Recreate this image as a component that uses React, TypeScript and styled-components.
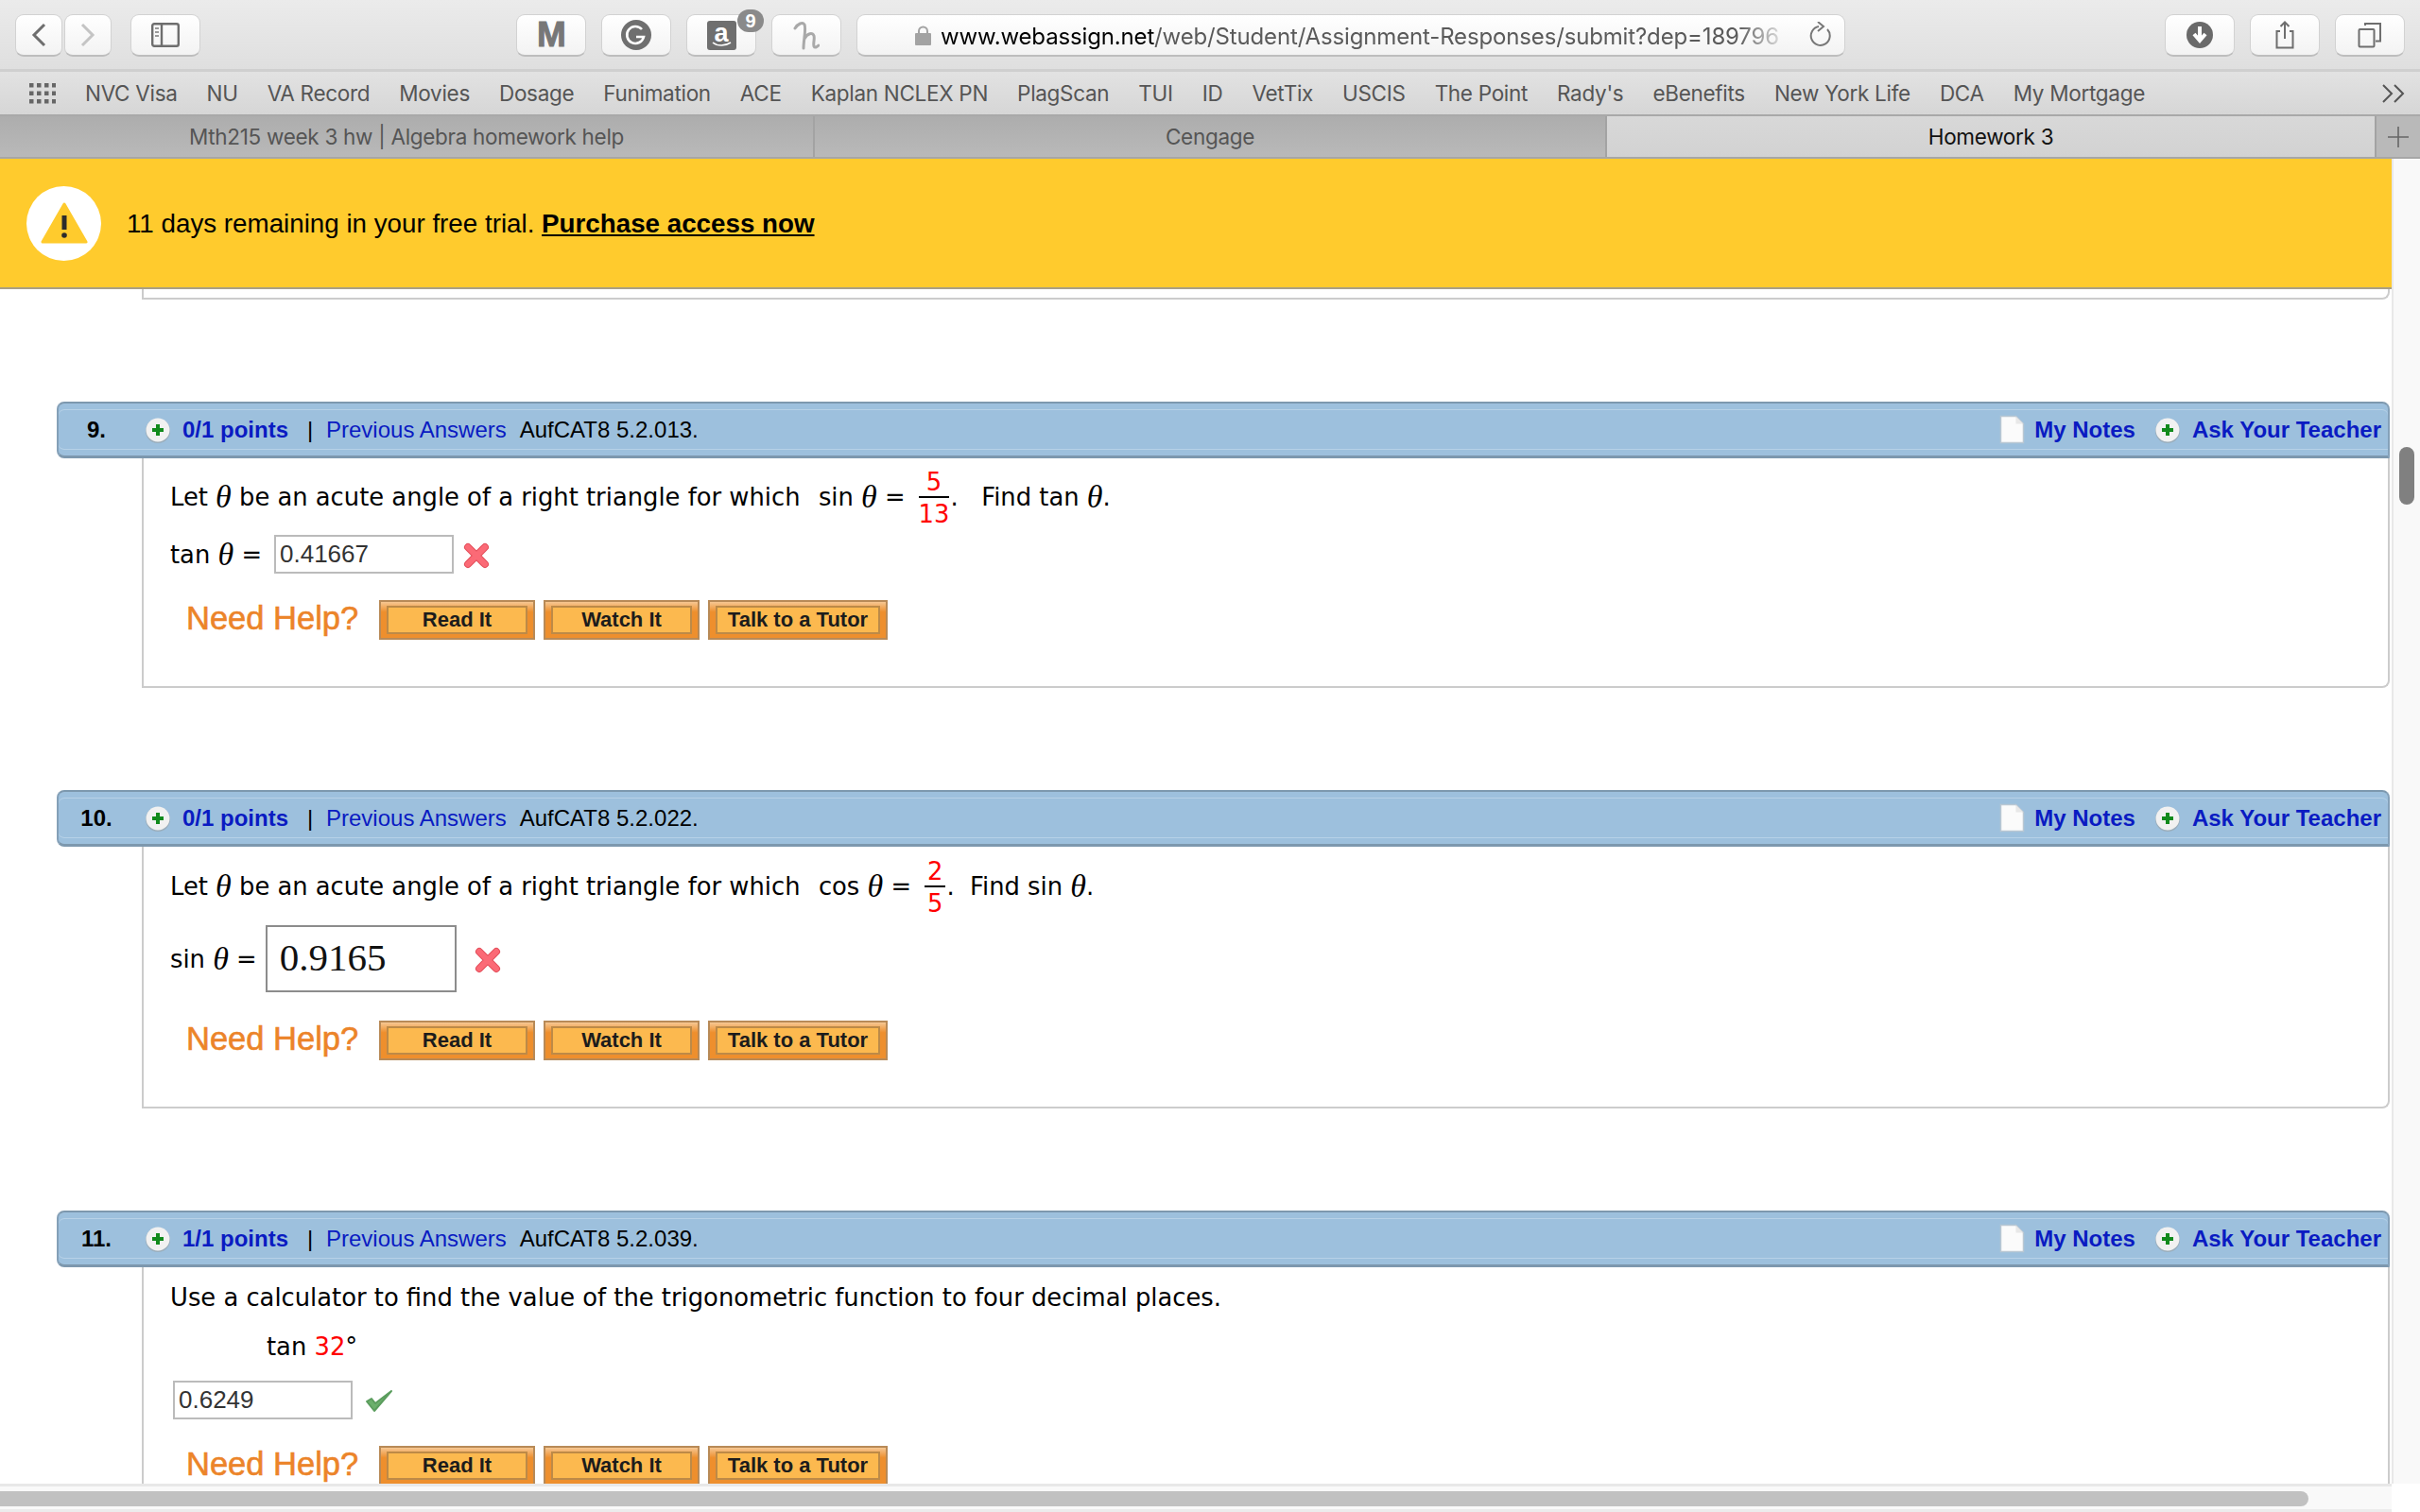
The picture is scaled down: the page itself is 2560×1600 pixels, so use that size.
import React from "react";
import styled, { createGlobalStyle } from "styled-components";

const GlobalStyle = createGlobalStyle`
  html, body {
    margin: 0;
    padding: 0;
    background: #fff;
  }
  * {
    box-sizing: border-box;
  }
`;

const Page = styled.div`
  width: 2560px;
  height: 1600px;
  display: flex;
  flex-direction: column;
  overflow: hidden;
  font-family: "Liberation Sans", Arial, sans-serif;
`;

/* browser chrome */
const Toolbar = styled.div`
  height: 76px;
  display: flex;
  align-items: flex-start;
  padding: 15px 16px 0;
  background: linear-gradient(#ebebeb, #dfdfdf);
  border-bottom: 3px solid #cfcfcf;
`;
const ToolGroup = styled.div<{ $gap?: number; $left?: number; $auto?: boolean }>`
  display: flex;
  gap: ${(p) => p.$gap ?? 16}px;
  margin-left: ${(p) => (p.$auto ? "auto" : `${p.$left ?? 0}px`)};
`;
const ToolButton = styled.div<{ $w: number }>`
  position: relative;
  width: ${(p) => p.$w}px;
  height: 45px;
  display: flex;
  align-items: center;
  justify-content: center;
  background: linear-gradient(#fff, #f3f3f3);
  border: 1px solid #d2d2d2;
  border-bottom: 2px solid #bdbdbd;
  border-radius: 9px;
`;
const MarkM = styled.span`
  font: bold 37px "Liberation Sans", sans-serif;
  color: #777;
  -webkit-text-stroke: 1px #777;
  letter-spacing: -1px;
`;
const AmazonTile = styled.div`
  position: relative;
  width: 31px;
  height: 31px;
  background: #6f6f6f;
  border-radius: 3px;
  color: #fff;
  font: bold 27px/26px "Liberation Sans", sans-serif;
  text-align: center;
`;
const Smile = styled.svg`
  position: absolute;
  left: 4px;
  bottom: 2px;
`;
const Badge = styled.span`
  position: absolute;
  top: -6px;
  right: -9px;
  width: 28px;
  height: 24px;
  border-radius: 12px;
  background: #8a8a8a;
  color: #fff;
  font: bold 20px/24px "Liberation Sans", sans-serif;
  text-align: center;
`;
const UrlBar = styled(ToolButton)`
  margin-left: 16px;
  justify-content: flex-start;
  padding-left: 61px;
  gap: 10px;
  overflow: hidden;
`;
const UrlText = styled.span`
  width: 898px;
  margin-top: 2px;
  white-space: nowrap;
  font: 24px "Inter", sans-serif;
  letter-spacing: -0.15px;
  color: #5a5a5a;
  -webkit-mask-image: linear-gradient(90deg, #000 94%, transparent 100%);
  mask-image: linear-gradient(90deg, #000 94%, transparent 100%);
  b {
    font-weight: 400;
    color: #000;
  }
`;
const Reload = styled.svg`
  margin-left: 11px;
  flex: none;
`;
const Bookmarks = styled.div`
  height: 45px;
  display: flex;
  align-items: center;
  gap: 31px;
  padding: 0 16px 0 31px;
  background: linear-gradient(#e2e2e2, #d6d6d6);
  font: 22.5px "Inter", sans-serif;
  letter-spacing: -0.3px;
  color: #555;
  white-space: nowrap;
`;
const More = styled.svg`
  margin-left: auto;
  margin-right: -1px;
`;
const Tabs = styled.div`
  height: 47px;
  display: flex;
  border-top: 2px solid #a9a9a9;
  border-bottom: 2px solid #a6a6a6;
  font: 22.5px "Inter", sans-serif;
  letter-spacing: -0.3px;
`;
const Tab = styled.div<{ $w: number; $active?: boolean }>`
  width: ${(p) => p.$w}px;
  display: flex;
  align-items: center;
  justify-content: center;
  color: ${(p) => (p.$active ? "#111" : "#555")};
  background: ${(p) => (p.$active ? "linear-gradient(#d8d8d8, #d2d2d2)" : "linear-gradient(#adadad, #b9b9b9)")};
  border-right: 2px solid #a3a3a3;
`;
const NewTab = styled.div`
  flex: 1;
  display: flex;
  align-items: center;
  justify-content: center;
  background: #b9b9b9;
`;

/* page area */
const Main = styled.div`
  flex: 1;
  min-height: 0;
  display: grid;
  grid-template-columns: 2530px 30px;
  grid-template-rows: 1fr 30px;
`;
const Content = styled.div`
  overflow: hidden;
  min-height: 0;
`;
const Banner = styled.div`
  height: 138px;
  display: flex;
  align-items: center;
  gap: 27px;
  padding-left: 28px;
  background: #ffcb2d;
  border-bottom: 2px solid #a99f84;
  font-size: 27.75px;
  color: #000;
`;
const BannerText = styled.span`
  margin-top: 2px;
`;
const WarnCircle = styled.div`
  width: 79px;
  height: 79px;
  flex: none;
  border-radius: 50%;
  background: #fff;
  display: flex;
  align-items: center;
  justify-content: center;
`;
const Purchase = styled.a`
  font-weight: bold;
  color: #000;
  text-decoration: underline;
`;
const Questions = styled.div`
  padding: 0 2px 0 60px;
`;
const PrevBoxEnd = styled.div`
  height: 11px;
  margin-left: 90px;
  border: 2px solid #ccc;
  border-top: none;
  border-bottom-right-radius: 8px;
`;
const Question = styled.section`
  margin-top: 108px;
`;
const Header = styled.div`
  height: 60px;
  display: flex;
  align-items: center;
  background: #9dc0dd;
  border: 2px solid #7d98ae;
  border-left-color: #84a0b8;
  border-right-color: #84a0b8;
  border-bottom-width: 3px;
  border-radius: 8px 8px 0 8px;
  box-shadow: inset 0 6px 0 #9dc0dd, inset 0 7px 0 #b7d1e7, inset 0 -6px 0 #9dc0dd, inset 0 -7px 0 #b7d1e7;
  font-size: 24px;
  color: #000;
  white-space: nowrap;
`;
const Num = styled.span`
  width: 80px;
  text-align: center;
  font-weight: bold;
`;
const PlusIcon = styled.svg<{ $left?: number }>`
  flex: none;
  margin-left: ${(p) => p.$left ?? 0}px;
`;
const Points = styled.a`
  margin-left: 12px;
  width: 130px;
  font-weight: bold;
  color: #0a1bc2;
`;
const Pipe = styled.span`
  width: 20px;
  margin-left: 2px;
`;
const PrevLink = styled.a`
  color: #0a1bc2;
  margin-right: 14px;
`;
const HeaderRight = styled.div`
  margin-left: auto;
  display: flex;
  align-items: center;
  padding-right: 7px;
  font-weight: bold;
  color: #0a1bc2;
`;
const DocIcon = styled.svg`
  margin-right: 10px;
`;
const NotesLabel = styled.a`
  margin-right: 20px;
`;
const AskLabel = styled.a`
  margin-left: 12px;
`;
const Body = styled.div`
  margin-left: 90px;
  padding-left: 28px;
  padding-bottom: 49px;
  border: 2px solid #ccc;
  border-top: none;
  border-bottom-right-radius: 8px;
  font-family: "DejaVu Sans", Verdana, sans-serif;
  font-size: 25.8px;
  color: #000;
`;
const Line = styled.div<{ $h: number; $left?: number }>`
  height: ${(p) => p.$h}px;
  display: flex;
  align-items: center;
  white-space: pre;
  padding-left: ${(p) => p.$left ?? 0}px;
`;
const Func = styled.span`
  margin-left: 3px;
`;
const Theta = styled.i`
  font-family: "Liberation Serif", serif;
  font-size: 34px;
`;
const Frac = styled.span`
  display: inline-flex;
  flex-direction: column;
  align-items: center;
  margin: 6px 1px 0 14px;
  color: #f00;
  line-height: 35px;
`;
const FracTop = styled.span`
  min-width: 22px;
  border-bottom: 2px solid #000;
  align-self: stretch;
  text-align: center;
  padding: 0 3px;
  line-height: 29px;
`;
const Red = styled.span`
  color: #f00;
`;
const AnswerRow = styled.div<{ $mt?: number; $left?: number }>`
  display: flex;
  align-items: center;
  white-space: pre;
  margin-top: ${(p) => p.$mt ?? 0}px;
  margin-left: ${(p) => p.$left ?? 0}px;
`;
const Answer = styled.div`
  width: 190px;
  height: 41px;
  margin-left: 13px;
  padding-left: 4px;
  border: 2px solid #bbb;
  font: 26px/37px "Liberation Sans", sans-serif;
  color: #333;
`;
const BigAnswer = styled.div`
  width: 202px;
  height: 71px;
  margin-left: 9px;
  padding-left: 13px;
  border: 2px solid #8c8c8c;
  font: 41px/65px "Liberation Serif", serif;
  color: #111;
`;
const Mark = styled.svg<{ $left: number; $down?: number }>`
  margin-left: ${(p) => p.$left}px;
  margin-top: ${(p) => p.$down ?? 2}px;
`;
const HelpRow = styled.div<{ $mt: number }>`
  display: flex;
  align-items: center;
  margin-top: ${(p) => p.$mt}px;
  margin-left: 17px;
  font-family: "Liberation Sans", sans-serif;
`;
const NeedHelp = styled.span`
  width: 204px;
  margin-top: -4px;
  font-size: 34.5px;
  line-height: 40px;
  color: #ec8429;
  -webkit-text-stroke: 0.6px #ec8429;
`;
const HelpButtons = styled.div`
  display: flex;
  gap: 9px;
`;
const HelpButton = styled.a<{ $w: number }>`
  width: ${(p) => p.$w}px;
  height: 42px;
  display: flex;
  padding: 4px 6px;
  background: linear-gradient(#f6c792, #ee8f2d 28%);
  border: 2px solid #b88a57;
`;
const HelpLabel = styled.span`
  flex: 1;
  display: flex;
  align-items: center;
  justify-content: center;
  background: #fcb94f;
  border: 2px solid #bd8a47;
  font-size: 22px;
  font-weight: bold;
  color: #1c1c1c;
`;
const VTrack = styled.div`
  padding-left: 6px;
  background: #f9f9f9;
  border-left: 2px solid #e8e8e8;
`;
const VThumb = styled.div`
  width: 16px;
  height: 61px;
  margin-top: 305px;
  border-radius: 8px;
  background: #808080;
`;
const HTrack = styled.div`
  padding-top: 5px;
  background: #f9f9f9;
  border-top: 3px solid #e8e8e8;
  border-bottom: 3px solid #ececec;
`;
const HThumb = styled.div`
  width: 2442px;
  height: 16px;
  border-radius: 0 8px 8px 0;
  background: #c1c1c1;
`;
const Corner = styled.div`
  background: #fff;
`;

const bookmarks = [
  "NVC Visa", "NU", "VA Record", "Movies", "Dosage", "Funimation", "ACE", "Kaplan NCLEX PN", "PlagScan",
  "TUI", "ID", "VetTix", "USCIS", "The Point", "Rady's", "eBenefits", "New York Life", "DCA", "My Mortgage",
];

const Plus = ({ left }: { left?: number }) => (
  <PlusIcon $left={left} width="28" height="28" viewBox="0 0 28 28">
    <circle cx="14" cy="15" r="13" fill="#9aa5ad" opacity="0.7" />
    <circle cx="14" cy="14" r="12.5" fill="#f1f1f1" />
    <path d="M14 8v12M8 14h12" stroke="#118a1c" strokeWidth="4" />
  </PlusIcon>
);

const Cross = ({ left, down }: { left: number; down?: number }) => (
  <Mark $left={left} $down={down} width="28" height="28" viewBox="0 0 28 28">
    <path d="M5 5l18 18M23 5L5 23" stroke="#e4505c" strokeWidth="8" strokeLinecap="round" />
    <path d="M5 5l18 18M23 5L5 23" stroke="#fb6a76" strokeWidth="6" strokeLinecap="round" />
  </Mark>
);

const Check = () => (
  <Mark $left={12} width="32" height="28" viewBox="0 0 32 28">
    <path d="M3 14l8 10L29 3l-17 13-4-5z" fill="#6cb06c" stroke="#5b9d5e" strokeWidth="2" strokeLinejoin="round" />
  </Mark>
);

function QuestionHeader({ num, points, code }: { num: string; points: string; code: string }) {
  return (
    <Header>
      <Num>{num}</Num>
      <Plus left={11} />
      <Points>{points}</Points>
      <Pipe>|</Pipe>
      <PrevLink>Previous Answers</PrevLink>
      <span>{code}</span>
      <HeaderRight>
        <DocIcon width="27" height="31" viewBox="0 0 27 31">
          <path d="M1.5 1.5h16l8 8v20h-24z" fill="#fbfbfb" stroke="#b9c7d3" strokeWidth="1.5" />
          <path d="M17.5 1.5v8h8" fill="#e8e8e8" />
        </DocIcon>
        <NotesLabel>My Notes</NotesLabel>
        <Plus />
        <AskLabel>Ask Your Teacher</AskLabel>
      </HeaderRight>
    </Header>
  );
}

function NeedHelpRow({ mt }: { mt: number }) {
  return (
    <HelpRow $mt={mt}>
      <NeedHelp>Need Help?</NeedHelp>
      <HelpButtons>
        <HelpButton $w={165}><HelpLabel>Read It</HelpLabel></HelpButton>
        <HelpButton $w={165}><HelpLabel>Watch It</HelpLabel></HelpButton>
        <HelpButton $w={190}><HelpLabel>Talk to a Tutor</HelpLabel></HelpButton>
      </HelpButtons>
    </HelpRow>
  );
}

export default function App() {
  return (
    <Page>
      <GlobalStyle />
      <Toolbar>
        <ToolGroup $gap={2}>
          <ToolButton $w={50}>
            <svg width="20" height="28" viewBox="0 0 20 28"><path d="M16 3L5 14l11 11" fill="none" stroke="#6e6e6e" strokeWidth="3" /></svg>
          </ToolButton>
          <ToolButton $w={50}>
            <svg width="20" height="28" viewBox="0 0 20 28"><path d="M4 3l11 11L4 25" fill="none" stroke="#c4c4c4" strokeWidth="3" /></svg>
          </ToolButton>
        </ToolGroup>
        <ToolGroup $left={20}>
          <ToolButton $w={74}>
            <svg width="30" height="26" viewBox="0 0 30 26">
              <rect x="1.2" y="1.2" width="27.6" height="23.6" rx="2" fill="none" stroke="#6e6e6e" strokeWidth="2.4" />
              <path d="M11 1v24" stroke="#6e6e6e" strokeWidth="2.4" />
              <path d="M4 6h4M4 10h4M4 14h4" stroke="#9a9a9a" strokeWidth="2" />
            </svg>
          </ToolButton>
        </ToolGroup>
        <ToolGroup $left={334}>
          <ToolButton $w={74}><MarkM>M</MarkM></ToolButton>
          <ToolButton $w={74}>
            <svg width="32" height="32" viewBox="0 0 32 32">
              <circle cx="16" cy="16" r="16" fill="#6f6f6f" />
              <path d="M22 10a9 9 0 1 0 2 8h-8" fill="none" stroke="#fff" strokeWidth="2.6" />
            </svg>
          </ToolButton>
          <ToolButton $w={74}>
            <AmazonTile>
              a
              <Smile width="23" height="8" viewBox="0 0 23 8"><path d="M2 2c5 4 13 4 19 0" fill="none" stroke="#fff" strokeWidth="1.6" /></Smile>
            </AmazonTile>
            <Badge>9</Badge>
          </ToolButton>
          <ToolButton $w={74}>
            <svg width="28" height="34" viewBox="0 0 28 34">
              <path d="M2 10c3-5 8-7 10-4 2 4-1 17-1 25M12 21c3-6 9-7 10-3 1 3-1 8 0 11 1 2 3 1 5-1" fill="none" stroke="#a9a9a9" strokeWidth="3" strokeLinecap="round" />
            </svg>
          </ToolButton>
        </ToolGroup>
        <UrlBar $w={1046}>
          <svg width="17" height="21" viewBox="0 0 17 21">
            <path d="M4 9V6a4.500 4.500 0 0 1 9 0v3" fill="none" stroke="#a3a3a3" strokeWidth="2" />
            <rect y="8" width="17" height="13" rx="1" fill="#a3a3a3" />
          </svg>
          <UrlText><b>www.webassign.net</b>/web/Student/Assignment-Responses/submit?dep=189796</UrlText>
          <Reload width="26" height="28" viewBox="0 0 26 28">
            <path d="M19 8a10 10 0 1 1-9-3" fill="none" stroke="#777" strokeWidth="2" />
            <path d="M9 0l6 5-6 5" fill="none" stroke="#777" strokeWidth="2" />
          </Reload>
        </UrlBar>
        <ToolGroup $auto>
          <ToolButton $w={74}>
            <svg width="28" height="28" viewBox="0 0 28 28">
              <circle cx="14" cy="14" r="14" fill="#6a6a6a" />
              <path d="M14 5v13M8 13l6 7 6-7" fill="none" stroke="#fff" strokeWidth="4" />
            </svg>
          </ToolButton>
          <ToolButton $w={74}>
            <svg width="24" height="30" viewBox="0 0 24 30">
              <path d="M7 11H3.500v17.500h17V11H17M12 19V2M7.500 6L12 1.500 16.500 6" fill="none" stroke="#6e6e6e" strokeWidth="2" />
            </svg>
          </ToolButton>
          <ToolButton $w={74}>
            <svg width="26" height="28" viewBox="0 0 26 28">
              <rect x="1.500" y="8" width="16" height="18.500" rx="1" fill="none" stroke="#6e6e6e" strokeWidth="2" />
              <path d="M8 4V2h16v18.500h-5" fill="none" stroke="#6e6e6e" strokeWidth="2" />
            </svg>
          </ToolButton>
        </ToolGroup>
      </Toolbar>

      <Bookmarks>
        <svg width="28" height="22" viewBox="0 0 28 22" fill="#666">
          {[0, 8.500, 17].map((y) =>
            [0, 8, 16, 24].map((x) => <rect key={`${x}-${y}`} x={x} y={y} width="4.500" height="4.500" />)
          )}
        </svg>
        {bookmarks.map((b) => (
          <span key={b}>{b}</span>
        ))}
        <More width="26" height="20" viewBox="0 0 26 20">
          <path d="M2 1l9 9-9 9M14 1l9 9-9 9" fill="none" stroke="#555" strokeWidth="2" />
        </More>
      </Bookmarks>

      <Tabs>
        <Tab $w={862}>Mth215 week 3 hw | Algebra homework help</Tab>
        <Tab $w={838}>Cengage</Tab>
        <Tab $w={814} $active>Homework 3</Tab>
        <NewTab>
          <svg width="22" height="22" viewBox="0 0 22 22"><path d="M11 0v22M0 11h22" stroke="#666" strokeWidth="1.600" /></svg>
        </NewTab>
      </Tabs>

      <Main>
        <Content>
          <Banner>
            <WarnCircle>
              <svg width="50" height="44" viewBox="0 0 50 44">
                <path d="M25 2L48 42H2z" fill="#ffcb2d" stroke="#ffcb2d" strokeWidth="3" strokeLinejoin="round" />
                <path d="M25 14v15" stroke="#2c2c2c" strokeWidth="5" />
                <circle cx="25" cy="35" r="2.800" fill="#2c2c2c" />
              </svg>
            </WarnCircle>
            <BannerText>
              11 days remaining in your free trial. <Purchase>Purchase access now</Purchase>
            </BannerText>
          </Banner>
          <Questions>
            <PrevBoxEnd />

            <Question>
              <QuestionHeader num="9." points="0/1 points" code="AufCAT8 5.2.013." />
              <Body>
                <Line $h={81}>
                  Let <Theta>θ</Theta> be an acute angle of a right triangle for which  <Func>sin </Func><Theta>θ</Theta> =
                  <Frac>
                    <FracTop>5</FracTop>
                    13
                  </Frac>
                  {".   Find tan "}<Theta>θ</Theta>.
                </Line>
                <AnswerRow>
                  tan <Theta>θ</Theta> =
                  <Answer>0.41667</Answer>
                  <Cross left={10} />
                </AnswerRow>
                <NeedHelpRow mt={28} />
              </Body>
            </Question>

            <Question>
              <QuestionHeader num="10." points="0/1 points" code="AufCAT8 5.2.022." />
              <Body>
                <Line $h={83}>
                  Let <Theta>θ</Theta> be an acute angle of a right triangle for which  <Func>cos </Func><Theta>θ</Theta> =
                  <Frac>
                    <FracTop>2</FracTop>
                    5
                  </Frac>
                  {".  Find sin "}<Theta>θ</Theta>.
                </Line>
                <AnswerRow>
                  sin <Theta>θ</Theta> =
                  <BigAnswer>0.9165</BigAnswer>
                  <Cross left={19} />
                </AnswerRow>
                <NeedHelpRow mt={30} />
              </Body>
            </Question>

            <Question>
              <QuestionHeader num="11." points="1/1 points" code="AufCAT8 5.2.039." />
              <Body>
                <Line $h={64}>Use a calculator to find the value of the trigonometric function to four decimal places.</Line>
                <Line $h={40} $left={102}>
                  tan <Red>32</Red>°
                </Line>
                <AnswerRow $mt={16} $left={-10}>
                  <Answer>0.6249</Answer>
                  <Check />
                </AnswerRow>
                <NeedHelpRow mt={28} />
              </Body>
            </Question>
          </Questions>
        </Content>
        <VTrack>
          <VThumb />
        </VTrack>
        <HTrack>
          <HThumb />
        </HTrack>
        <Corner />
      </Main>
    </Page>
  );
}
